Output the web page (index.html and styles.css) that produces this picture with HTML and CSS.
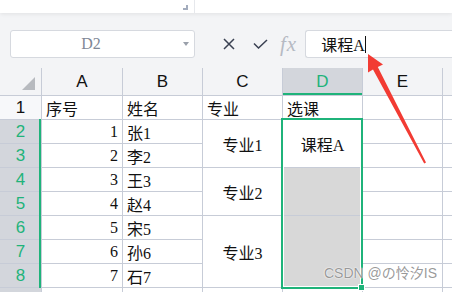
FILE: index.html
```html
<!DOCTYPE html>
<html lang="zh-CN">
<head>
    <meta charset="UTF-8">
    <title>选课表</title>
    <link rel="stylesheet" href="styles.css">
</head>
<body>
    <div class="app">
        <div class="top-strip">
            <span class="resize-mark"></span>
            <span class="top-sep"></span>
        </div>

        <div class="formula-bar">
            <div class="name-box">
                <span class="name-text">D2</span>
                <span class="drop-caret"></span>
            </div>
            <div class="fx-tools">
                <svg class="tool-x" width="12" height="12" viewBox="0 0 12 12">
                    <path d="M1 1 L11 11 M11 1 L1 11" stroke="#3a4152" stroke-width="1.5" fill="none"/>
                </svg>
                <svg class="tool-ok" width="15" height="10" viewBox="0 0 15 10">
                    <path d="M1 4.5 L5.5 9 L14 1" stroke="#3a4152" stroke-width="1.5" fill="none"/>
                </svg>
                <span class="tool-fx">fx</span>
            </div>
            <div class="formula-input">课程A<span class="text-cursor"></span></div>
        </div>

        <div class="sheet">
            <!-- 列标题 -->
            <div class="corner"><span class="select-all"></span></div>
            <div class="col-head">A</div>
            <div class="col-head">B</div>
            <div class="col-head">C</div>
            <div class="col-head active">D</div>
            <div class="col-head">E</div>
            <div class="col-head"></div>

            <!-- 第1行 -->
            <div class="row-head first">1</div>
            <div class="cell">序号</div>
            <div class="cell">姓名</div>
            <div class="cell">专业</div>
            <div class="cell">选课</div>
            <div class="cell"></div>
            <div class="cell"></div>

            <div class="row-head">2</div>
            <div class="cell num">1</div>
            <div class="cell">张1</div>
            <div class="cell merged span2">专业1</div>
            <div class="cell merged span2 current">课程A</div>
            <div class="cell"></div>
            <div class="cell"></div>

            <div class="row-head">3</div>
            <div class="cell num">2</div>
            <div class="cell">李2</div>
            <div class="cell"></div>
            <div class="cell"></div>

            <div class="row-head">4</div>
            <div class="cell num">3</div>
            <div class="cell">王3</div>
            <div class="cell merged span2">专业2</div>
            <div class="cell merged span2 picked"></div>
            <div class="cell"></div>
            <div class="cell"></div>

            <div class="row-head">5</div>
            <div class="cell num">4</div>
            <div class="cell">赵4</div>
            <div class="cell"></div>
            <div class="cell"></div>

            <div class="row-head">6</div>
            <div class="cell num">5</div>
            <div class="cell">宋5</div>
            <div class="cell merged span3">专业3</div>
            <div class="cell merged span3 picked"></div>
            <div class="cell"></div>
            <div class="cell"></div>

            <div class="row-head">7</div>
            <div class="cell num">6</div>
            <div class="cell">孙6</div>
            <div class="cell"></div>
            <div class="cell"></div>

            <div class="row-head">8</div>
            <div class="cell num">7</div>
            <div class="cell">石7</div>
            <div class="cell"></div>
            <div class="cell"></div>

            <div class="row-head"></div>
            <div class="cell"></div>
            <div class="cell"></div>
            <div class="cell"></div>
            <div class="cell"></div>
            <div class="cell"></div>
            <div class="cell"></div>

            <!-- 选区 -->
            <div class="row-marker"></div>
            <div class="selection"></div>
        </div>

        <svg class="arrow" width="452" height="292" viewBox="0 0 452 292">
            <polygon points="368,54 383,64.5 377.8,67 426,162.5 424.2,163.5 373,69.6 368,72.5" fill="#f23b33"/>
        </svg>

        <div class="watermark">CSDN @の怜汐IS</div>
    </div>
</body>
</html>
```

FILE: styles.css
```css
body {
    margin: 0;
    font-family: "Liberation Sans", "Noto Sans CJK SC", sans-serif;
    background: #f3f4f6;
}
.app {
    position: relative;
    width: 452px;
    height: 292px;
    overflow: hidden;
}
.top-strip {
    height: 13px;
    background: white;
    box-shadow: 0 1px 4px rgba(0,0,0,0.08);
    display: flex;
    align-items: flex-start;
    padding-left: 183px;
    position: relative;
    z-index: 1;
}
.resize-mark {
    width: 3px;
    height: 3px;
    margin-top: 5px;
    border-right: 2px solid #a3acbd;
    border-bottom: 2px solid #a3acbd;
}
.top-sep {
    width: 1px;
    height: 13px;
    margin-left: 6px;
    background: #e6e8ec;
}
.formula-bar {
    display: flex;
    align-items: center;
    padding: 17px 0 10px 10px;
    height: 28px;
}
.name-box {
    width: 183px;
    height: 26px;
    background: white;
    border: 1px solid #d6d9df;
    border-radius: 3px;
    display: flex;
    align-items: center;
}
.name-text {
    flex: 1;
    text-align: center;
    font-family: "Liberation Serif", serif;
    font-size: 16px;
    color: #7f8796;
    padding-right: 12px;
}
.drop-caret {
    width: 0;
    height: 0;
    border-left: 3px solid transparent;
    border-right: 3px solid transparent;
    border-top: 4px solid #9aa0aa;
    margin-right: 5px;
}
.fx-tools {
    display: flex;
    align-items: center;
    margin-left: 28px;
}
.tool-ok {
    margin-left: 18px;
}
.tool-fx {
    margin-left: 12px;
    font-family: "Liberation Serif", serif;
    font-style: italic;
    font-size: 21px;
    color: #b6bac3;
    letter-spacing: 1px;
}
.formula-input {
    flex: 1;
    height: 26px;
    margin-left: 8px;
    background: white;
    border: 1px solid #d6d9df;
    border-right: none;
    border-radius: 3px 0 0 3px;
    padding-left: 15px;
    display: flex;
    align-items: center;
    font-family: "Liberation Serif", "Noto Sans CJK SC", serif;
    font-size: 16px;
    color: #111;
}
.text-cursor {
    width: 1px;
    height: 17px;
    background: #111;
}
.sheet {
    position: relative;
    display: grid;
    grid-template-columns: 41px 80px 79px 79px 79px 79px 1fr;
    grid-template-rows: 27px repeat(8, 23px) 1fr;
    gap: 1px;
    background: #c7ccd7;
    height: 224px;
}
.corner {
    background: #f3f4f6;
    display: flex;
    justify-content: flex-end;
    align-items: flex-end;
    padding: 0 6px 5px 0;
}
.select-all {
    width: 0;
    height: 0;
    border-left: 13px solid transparent;
    border-bottom: 13px solid #b7babf;
}
.col-head {
    background: #f3f4f6;
    display: flex;
    align-items: center;
    justify-content: center;
    font-size: 17px;
    color: #111;
}
.col-head.active {
    background: #d3d6dc;
    color: #1fb37a;
    box-shadow: inset 0 -2px 0 #1fb37a;
}
.row-head {
    background: #d3d6dc;
    display: flex;
    align-items: center;
    justify-content: center;
    font-size: 17px;
    color: #1fb37a;
}
.row-head.first {
    background: #f7f8fa;
    color: #111;
}
.cell {
    background: white;
    display: flex;
    align-items: center;
    padding: 0 4px;
    font-family: "Liberation Serif", "Noto Sans CJK SC", serif;
    font-size: 16px;
    color: #111;
    overflow: hidden;
    white-space: nowrap;
}
.cell.num {
    justify-content: flex-end;
}
.cell.merged {
    justify-content: center;
}
.span2 {
    grid-row: span 2;
}
.span3 {
    grid-row: span 3;
}
.cell.picked {
    background: #d8d8d8;
}
.row-marker {
    position: absolute;
    left: 39px;
    top: 51px;
    width: 2px;
    height: 169px;
    background: #1fb37a;
}
.selection {
    position: absolute;
    left: 281px;
    top: 50px;
    width: 82px;
    height: 171px;
    box-sizing: border-box;
    border: 2px solid #1fb37a;
    box-shadow: inset 0 0 0 1px white;
}
.selection::after {
    content: "";
    position: absolute;
    right: -4px;
    bottom: -4px;
    width: 5px;
    height: 5px;
    background: #1fb37a;
    border: 1px solid white;
}
.arrow {
    position: absolute;
    top: 0;
    left: 0;
    z-index: 5;
}
.watermark {
    position: absolute;
    right: 15px;
    bottom: 10px;
    z-index: 6;
    font-family: "Liberation Sans", "Noto Sans CJK SC", sans-serif;
    font-size: 14px;
    color: rgba(120,120,120,0.75);
    text-shadow: 0 0 2px white, 0 0 1px white;
}
```
